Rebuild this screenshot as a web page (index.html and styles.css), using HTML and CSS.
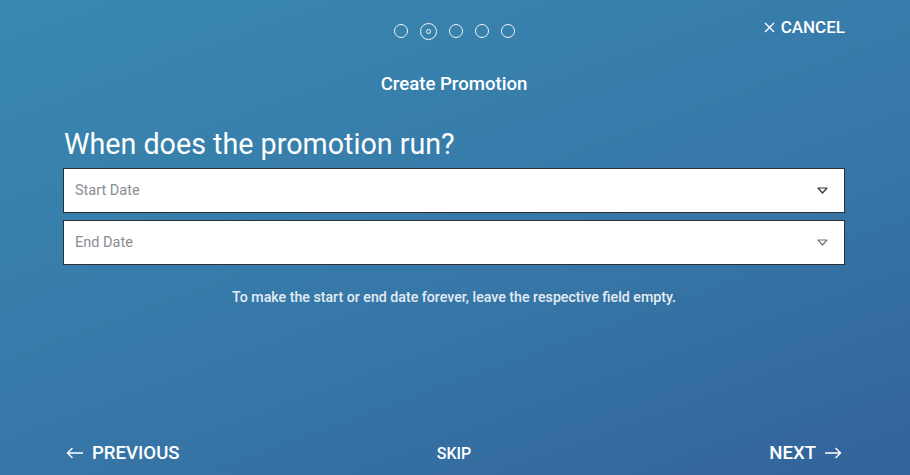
FILE: index.html
```html
<!DOCTYPE html>
<html lang="en">
<head>
  <meta charset="UTF-8">
  <meta name="viewport" content="width=device-width, initial-scale=1.0">
  <title>Create Promotion</title>
  <link rel="stylesheet" href="styles.css">
</head>
<body>
  <div class="wizard">
    <div class="top-bar">
      <div class="steps">
        <span class="step"></span>
        <span class="step current"></span>
        <span class="step"></span>
        <span class="step"></span>
        <span class="step"></span>
      </div>
      <a class="cancel" href="#">
        <svg class="x" width="11" height="11" viewBox="0 0 11 11"><path d="M1 1 L10 10 M10 1 L1 10" stroke="white" stroke-width="1.4" fill="none"/></svg>CANCEL</a>
    </div>

    <div class="title">Create Promotion</div>

    <div class="content">
      <h1>When does the promotion run?</h1>
      <div class="select">
        <span class="placeholder">Start Date</span>
        <svg class="caret" width="11" height="7" viewBox="0 0 11 7"><path d="M1 1 H10 L5.5 6 Z" fill="none" stroke="#333" stroke-width="1.2" stroke-linejoin="round"/></svg>
      </div>
      <div class="select">
        <span class="placeholder">End Date</span>
        <svg class="caret" width="11" height="7" viewBox="0 0 11 7"><path d="M1 1 H10 L5.5 6 Z" fill="none" stroke="#777" stroke-width="1.2" stroke-linejoin="round"/></svg>
      </div>
      <p class="hint">To make the start or end date forever, leave the respective field empty.</p>
    </div>

    <div class="footer">
      <a class="nav prev" href="#">
        <svg class="arrow" width="18" height="12" viewBox="0 0 18 12"><path d="M17 6 H1.5 M6.5 1 L1.5 6 L6.5 11" stroke="white" stroke-width="1.4" fill="none"/></svg>PREVIOUS</a>
      <a class="nav skip" href="#">SKIP</a>
      <a class="nav next" href="#">NEXT<svg class="arrow" width="18" height="12" viewBox="0 0 18 12"><path d="M1 6 H16.5 M11.5 1 L16.5 6 L11.5 11" stroke="white" stroke-width="1.4" fill="none"/></svg></a>
    </div>
  </div>
</body>
</html>
```

FILE: styles.css
```css
html, body {
  margin: 0;
  height: 100%;
}

body {
  font-family: Roboto, "Liberation Sans", sans-serif;
  color: white;
  background: linear-gradient(160deg, #3989b1 0%, #3676a7 60%, #33639a 100%);
}

.wizard {
  display: flex;
  flex-direction: column;
  height: 100%;
  padding: 0 65px 0 63px;
  box-sizing: border-box;
}

a {
  color: white;
  text-decoration: none;
}

.top-bar {
  position: relative;
  display: flex;
  justify-content: center;
  align-items: center;
  height: 62px;
}

.steps {
  display: flex;
  align-items: center;
  gap: 12px;
}

.step {
  width: 12px;
  height: 12px;
  border: 1px solid #f2f6fa;
  border-radius: 50%;
}

.step.current {
  position: relative;
  width: 15px;
  height: 15px;
}

.step.current::after {
  content: "";
  position: absolute;
  left: 5px;
  top: 5px;
  width: 3px;
  height: 3px;
  border: 1px solid #f2f6fa;
  border-radius: 50%;
}

.cancel {
  position: absolute;
  right: 0;
  top: 17px;
  font-size: 17px;
  font-weight: 500;
  display: flex;
  align-items: center;
}

.cancel .x {
  margin-right: 6px;
}

.title {
  text-align: center;
  font-size: 18.6px;
  font-weight: 500;
  margin-top: 11px;
}

.content {
  flex: 1;
}

h1 {
  font-size: 28.7px;
  font-weight: 400;
  margin: 30px 0 5px 1px;
  line-height: 38px;
}

.select {
  display: flex;
  align-items: center;
  justify-content: space-between;
  height: 45px;
  background: white;
  border: 1px solid #2c2f33;
  box-sizing: border-box;
  padding: 0 16px 0 11px;
  margin-bottom: 7px;
}

.placeholder {
  color: #8a8d92;
  font-size: 14.5px;
}

.hint {
  text-align: center;
  font-size: 14.2px;
  font-weight: 500;
  color: #e4ecf3;
  margin: 24px 0 0 0;
}

.footer {
  display: grid;
  grid-template-columns: 1fr auto 1fr;
  align-items: center;
  height: 44px;
  margin-bottom: 0;
}

.nav {
  font-size: 18.6px;
  font-weight: 500;
  display: flex;
  align-items: center;
}

.prev {
  justify-self: start;
  margin-left: 3px;
}

.prev .arrow {
  margin-right: 8px;
}

.next {
  justify-self: end;
  margin-right: 3px;
}

.next .arrow {
  margin-left: 8px;
}

.skip {
  font-size: 16px;
}
```
